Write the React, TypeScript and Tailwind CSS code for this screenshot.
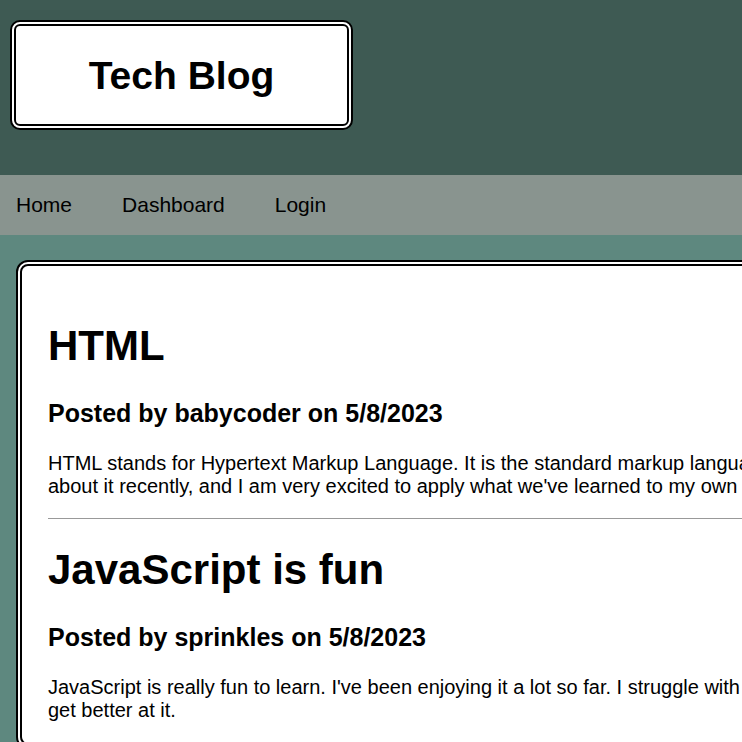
const posts = [
  {
    id: 1,
    title: "HTML",
    author: "babycoder",
    date: "5/8/2023",
    content:
      "HTML stands for Hypertext Markup Language. It is the standard markup language for creating web pages. We have been learning about it recently, and I am very excited to apply what we've learned to my own projects.",
  },
  {
    id: 2,
    title: "JavaScript is fun",
    author: "sprinkles",
    date: "5/8/2023",
    content:
      "JavaScript is really fun to learn. I've been enjoying it a lot so far. I struggle with it sometimes, but I am practicing every day so I can get better at it.",
  },
];

export default function App() {
  return (
    <div className="h-screen w-screen overflow-hidden bg-[#5e887f] font-['Liberation_Sans',Arial,sans-serif] text-black">
      <header className="h-[175px] bg-[#3e5a53] pl-[10px] pt-5">
        <div className="flex h-[110px] w-[343px] items-center justify-center rounded-[10px] border-[6px] border-double border-black bg-white">
          <h1 className="text-[39px] font-bold leading-none">Tech Blog</h1>
        </div>
      </header>

      <nav className="flex h-[60px] items-center gap-[50px] bg-[#89948f] pl-4 text-[21px]">
        <a>Home</a>
        <a>Dashboard</a>
        <a>Login</a>
      </nav>

      <main className="pl-4 pt-[25px]">
        <div className="w-[1234px] rounded-xl border-[6px] border-double border-black bg-white pl-[26px] pt-[59px]">
          {posts.map((post, i) => (
            <article key={post.id} className={i > 0 ? "mt-[30px]" : ""}>
              <h2 className="text-[42px] font-bold leading-[42px]">
                {post.title}
              </h2>
              <h3 className="mt-[34px] text-[25px] font-bold leading-[25px]">
                Posted by {post.author} on {post.date}
              </h3>
              <p className="mt-[26px] w-[1170px] text-[20px] leading-[23px]">
                {post.content}
              </p>
              <hr className="mt-5 border-0 border-t border-[#999]" />
            </article>
          ))}
        </div>
      </main>
    </div>
  );
}
